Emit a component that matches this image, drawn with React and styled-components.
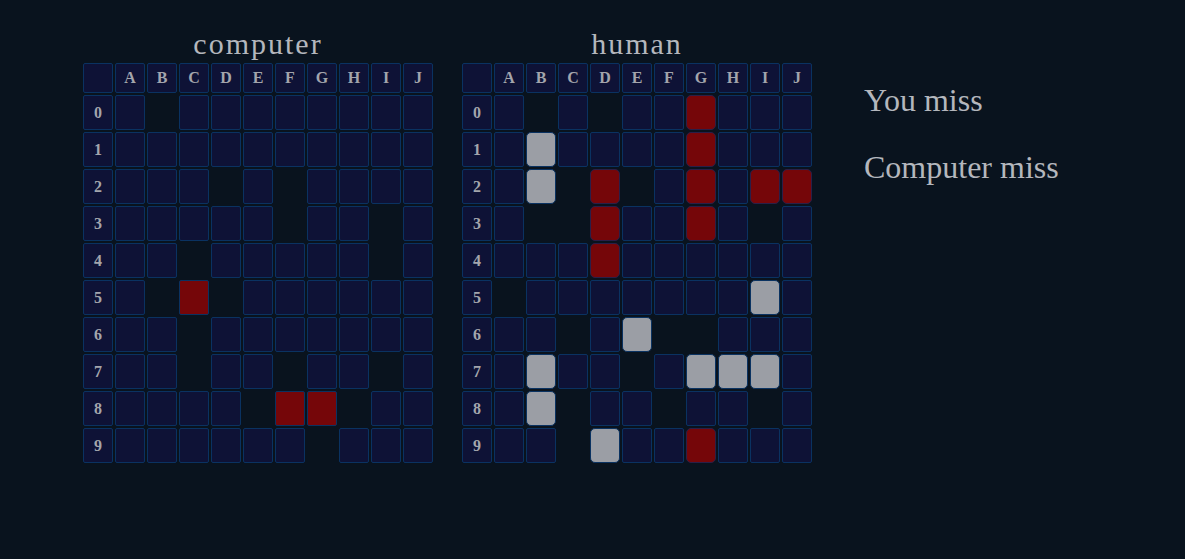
import React from "react";
import styled, { createGlobalStyle, css } from "styled-components";

const GlobalStyle = createGlobalStyle`
  body {
    margin: 0;
    background: #09131e;
    color: #b4b7bd;
    font-family: "Liberation Serif", "Times New Roman", serif;
    font-size: 16px;
  }
`;

const Game = styled.main`
  display: flex;
  flex-wrap: wrap;
  align-items: flex-start;
  padding: 27px 24px 25px 81px;
`;

const Boards = styled.div`
  display: flex;
  gap: 25px;
`;

const Board = styled.table`
  border-collapse: separate;
  border-spacing: 2px;
  table-layout: fixed;
`;

const Owner = styled.caption`
  font-size: 30px;
  line-height: 34px;
  letter-spacing: 2px;
`;

const box = css`
  box-sizing: border-box;
  width: 30px;
  padding: 0;
  border: 1px solid #0a3261;
  border-radius: 2px;
  background: #0e1236;
`;

const Label = styled.th`
  ${box}
  height: 30px;
  color: #a3a5ac;
  font-size: 16px;
  text-align: center;
`;

const fills = {
  ".": css``,
  m: css`
    border-color: transparent;
    background: transparent;
  `,
  x: css`
    background: #750609;
  `,
  s: css`
    background: #9b9ea5;
  `,
};

const Cell = styled.td`
  ${box}
  height: 35px;
  ${({ $state }) => fills[$state]}
  ${({ $fleet, $state }) =>
    $fleet &&
    (($state === "x" && "border-radius: 5px; border-color: #2a1f48;") ||
      ($state === "s" && "border-radius: 5px; border-color: #0a3261;"))}
`;

const Messages = styled.section`
  display: flex;
  flex-direction: column;
  gap: 31px;
  padding: 55px 0 0 50px;
`;

const Message = styled.p`
  margin: 0;
  font-size: 32px;
  line-height: 36px;
`;

const COLUMNS = [..."ABCDEFGHIJ"];

// "." water, "m" miss, "x" hit, "s" ship
const STATE_NAMES = { ".": "water", m: "miss", x: "hit", s: "ship" };

const computerRows = [
  ".m........",
  "..........",
  "...m.m....",
  ".....m..m.",
  "..m.....m.",
  ".mxm......",
  "..m.......",
  "..m..m..m.",
  "....mxxm..",
  "......m...",
];

const humanRows = [
  ".m.m..x...",
  ".s....x...",
  ".smxm.x.xx",
  ".mmx..x.m.",
  "...x......",
  "m.......s.",
  "..m.smm...",
  ".s..m.sss.",
  ".sm..m..m.",
  "..ms..x...",
];

function Battlefield({ owner, rows, fleet }) {
  return (
    <Board>
      <Owner>{owner}</Owner>
      <thead>
        <tr>
          <Label />
          {COLUMNS.map((name) => (
            <Label key={name} scope="col">
              {name}
            </Label>
          ))}
        </tr>
      </thead>
      <tbody>
        {rows.map((row, y) => (
          <tr key={y}>
            <Label scope="row">{y}</Label>
            {[...row].map((state, x) => (
              <Cell
                key={COLUMNS[x]}
                $state={state}
                $fleet={fleet}
                aria-label={`${COLUMNS[x]}${y} ${STATE_NAMES[state]}`}
              />
            ))}
          </tr>
        ))}
      </tbody>
    </Board>
  );
}

export default function App() {
  return (
    <>
      <GlobalStyle />
      <Game>
        <Boards>
          <Battlefield owner="computer" rows={computerRows} />
          <Battlefield owner="human" rows={humanRows} fleet />
        </Boards>
        <Messages aria-live="polite">
          <Message>You miss</Message>
          <Message>Computer miss</Message>
        </Messages>
      </Game>
    </>
  );
}
